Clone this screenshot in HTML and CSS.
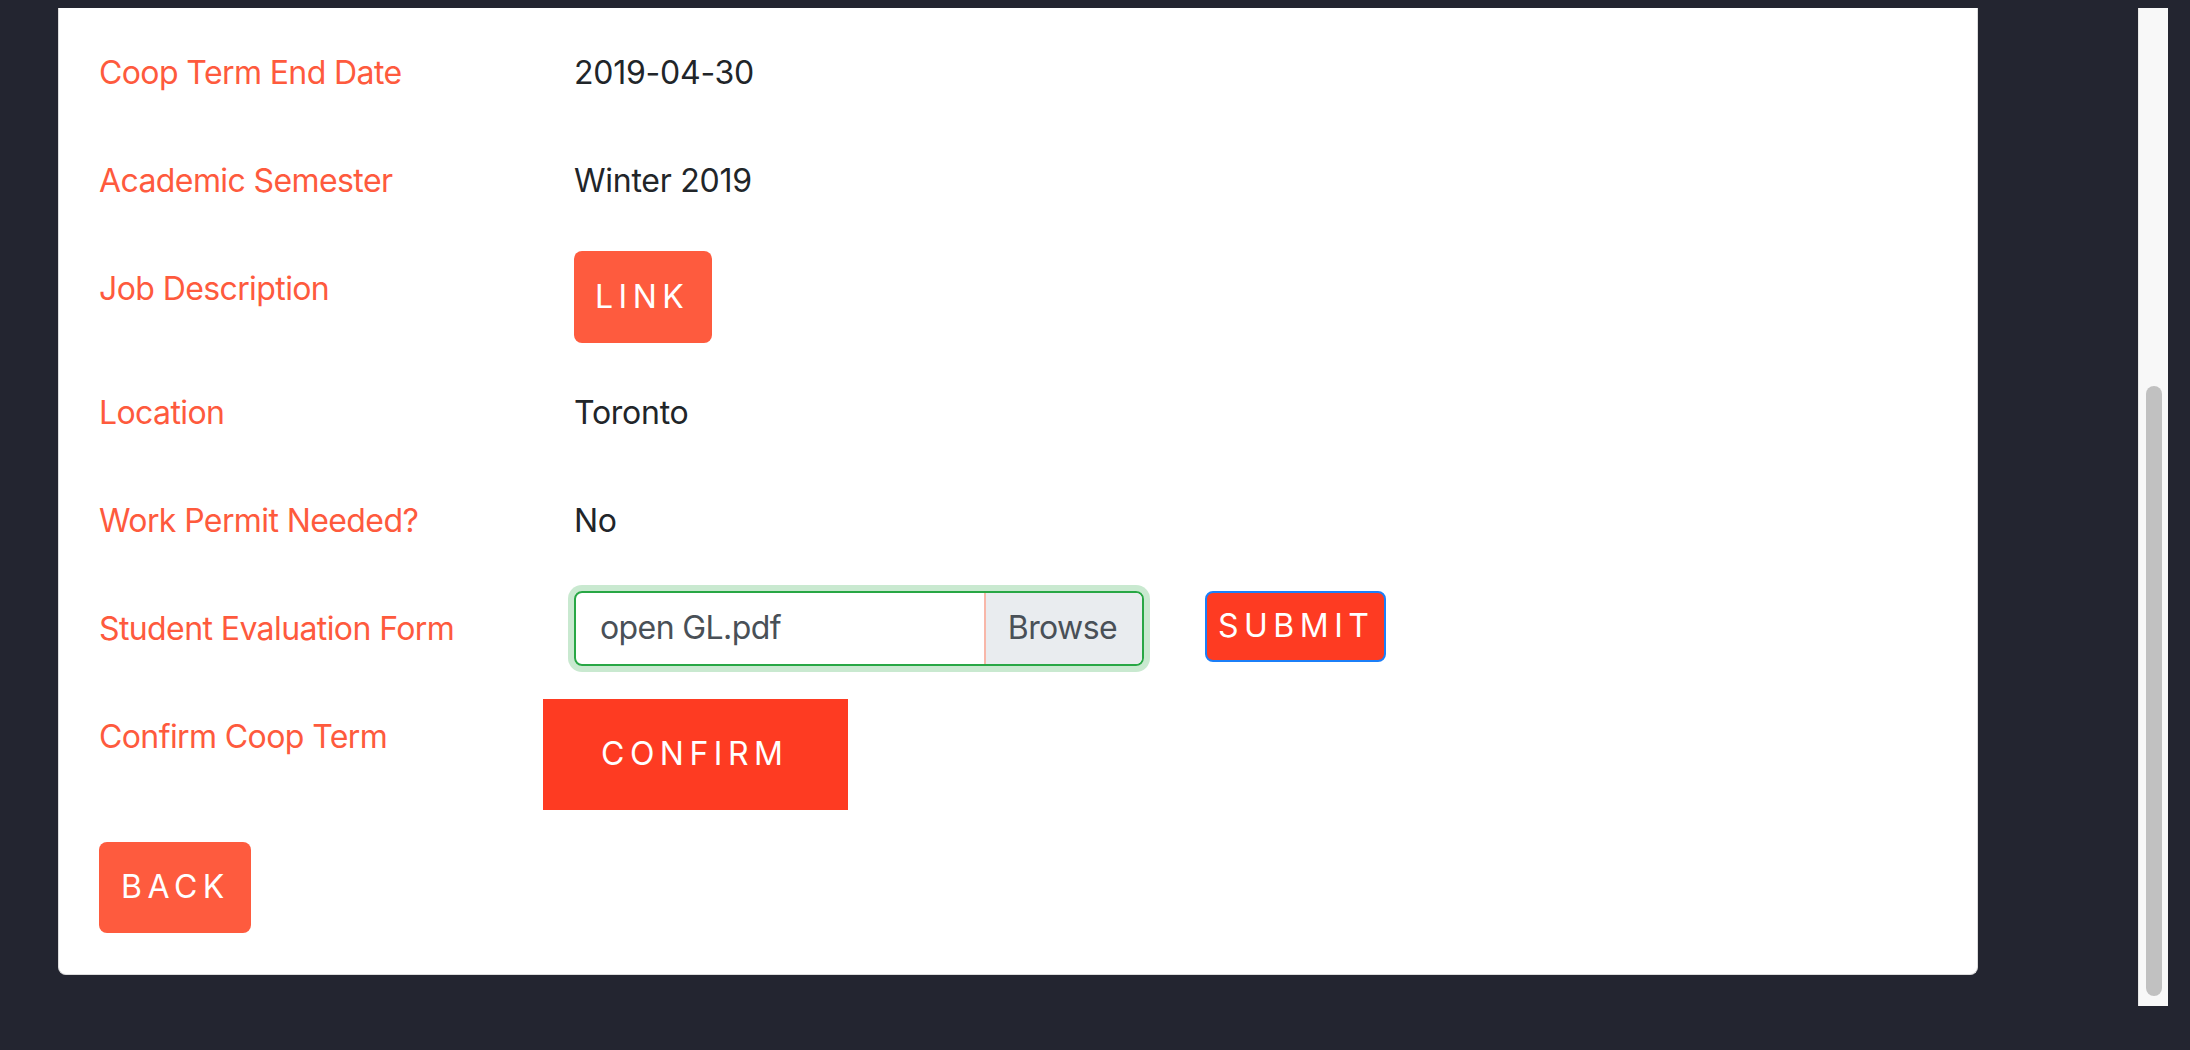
FILE: index.html
```html
<!DOCTYPE html>
<html lang="en">
<head>
<meta charset="utf-8">
<title>Coop Term</title>
<link rel="stylesheet" href="styles.css">
</head>
<body>
<div class="page">
  <main class="content">
    <section class="card">
      <div class="card-body">
        <div class="form-row">
          <div class="label">Coop Term End Date</div>
          <div class="value">2019-04-30</div>
        </div>
        <div class="form-row">
          <div class="label">Academic Semester</div>
          <div class="value">Winter 2019</div>
        </div>
        <div class="form-row form-row-btn">
          <div class="label">Job Description</div>
          <div class="value-ctl"><a class="btn btn-orange btn-link">LINK</a></div>
        </div>
        <div class="form-row">
          <div class="label">Location</div>
          <div class="value">Toronto</div>
        </div>
        <div class="form-row">
          <div class="label">Work Permit Needed?</div>
          <div class="value">No</div>
        </div>
        <div class="form-row">
          <div class="label">Student Evaluation Form</div>
          <div class="value-ctl file-group">
            <div class="file-input">
              <span class="file-name">open GL.pdf</span>
              <span class="file-browse">Browse</span>
            </div>
            <button class="btn btn-red btn-submit" type="button">SUBMIT</button>
          </div>
        </div>
        <div class="form-row form-row-confirm">
          <div class="label">Confirm Coop Term</div>
          <div class="value-ctl"><button class="btn btn-red btn-confirm" type="button">CONFIRM</button></div>
        </div>
        <div class="back-row">
          <a class="btn btn-orange btn-back">BACK</a>
        </div>
      </div>
    </section>
  </main>
  <div class="scrollbar"><div class="scroll-thumb"></div></div>
</div>
</body>
</html>
```

FILE: styles.css
```css
html, body {
  margin: 0;
  padding: 0;
}

body {
  background: #232530;
  font-family: "Inter", "Liberation Sans", sans-serif;
  font-size: 32px;
  line-height: 48px;
  letter-spacing: -0.6px;
  color: #212529;
  height: 1050px;
  overflow: hidden;
}

.page {
  display: flex;
  align-items: flex-start;
  padding-top: 8px;
}

.content {
  flex: none;
  margin-left: 58px;
  width: 1920px;
}

.card {
  background: #ffffff;
  border: 1px solid #dcdcdc;
  border-top: none;
  border-radius: 0 0 8px 8px;
}

.card-body {
  padding: 27px 40px 41px 40px;
}

.form-row {
  display: grid;
  grid-template-columns: 475px 1fr;
  align-items: start;
  min-height: 76px;
  margin-bottom: 32px;
}

.form-row-confirm {
  grid-template-columns: 444px 1fr;
}

.label {
  color: #fe5a3d;
  padding: 14px 0 12px 0;
}

.value {
  padding: 14px 0 12px 0;
  color: #212529;
  letter-spacing: -0.25px;
}

.value-ctl {
  display: flex;
  align-items: flex-start;
}

.btn {
  display: inline-block;
  color: #ffffff;
  font-family: "Inter", "Liberation Sans", sans-serif;
  font-size: 32px;
  line-height: 48px;
  letter-spacing: 5.5px;
  text-decoration: none;
  border: none;
  cursor: pointer;
}

.btn-orange {
  background: #fe5b3e;
  border-radius: 8px;
}

.btn-red {
  background: #fe3b22;
}

.btn-link {
  padding: 22px 23px 22px 21px;
}

.btn-back {
  padding: 21px 21px 22px 22px;
}

.btn-submit {
  border: 2px solid #1b7ff8;
  border-radius: 8px;
  padding: 9px 10px 10px 11px;
}

.btn-confirm {
  padding: 31px 60px 32px 58px;
  border-radius: 0;
}

.file-group {
  align-items: flex-start;
}

.file-input {
  display: flex;
  width: 566px;
  height: 71px;
  border: 2px solid #28a745;
  border-radius: 8px;
  box-shadow: 0 0 0 6px rgba(40, 167, 69, 0.25);
  overflow: hidden;
  color: #495057;
}

.file-name {
  flex: 1;
  padding: 11px 24px;
}

.file-browse {
  background: #e9ecef;
  border-left: 2px solid #f8b7a9;
  padding: 11px 25px 12px 22px;
}

.btn-submit {
  margin-left: 61px;
}

.back-row {
  display: flex;
}

.scrollbar {
  flex: none;
  margin-left: 160px;
  width: 29px;
  height: 998px;
  background: #f8f8f8;
  border-left: 1px solid #e6e6e6;
  display: flex;
  flex-direction: column;
}

.scroll-thumb {
  margin-top: 378px;
  margin-left: 7px;
  width: 16px;
  height: 610px;
  border-radius: 8px;
  background: #c1c1c1;
}
```
